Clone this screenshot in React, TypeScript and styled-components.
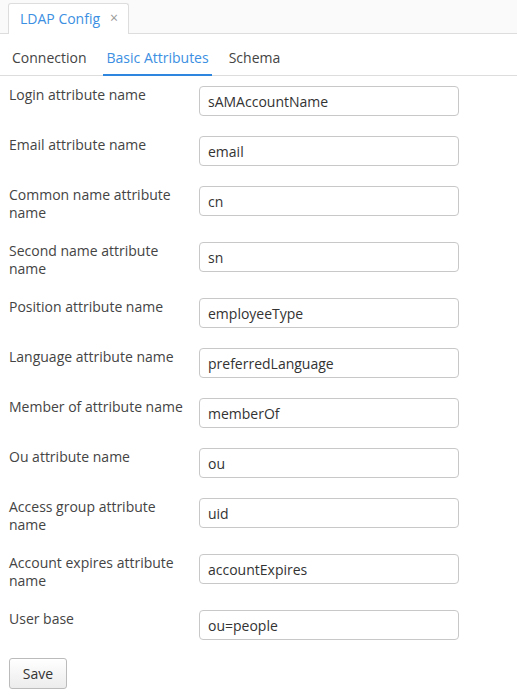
import React from "react";
import styled, { createGlobalStyle } from "styled-components";

const Global = createGlobalStyle`
  html, body { margin: 0; padding: 0; background: #fff; }
  body { font-family: "Open Sans", "Liberation Sans", sans-serif; font-size: 14px; color: #333; }
  * { box-sizing: border-box; }
`;

const TopBar = styled.div`
  display: flex;
  align-items: flex-end;
  height: 34px;
  padding-left: 8px;
  background: #fafafa;
  border-bottom: 1px solid #dddddd;
`;

const DocTab = styled.div`
  display: flex;
  align-items: center;
  gap: 10px;
  height: 31px;
  margin-bottom: -1px;
  padding: 0 10px 2px 11px;
  background: #fff;
  border: 1px solid #dddddd;
  border-bottom: none;
  border-radius: 3px 3px 0 0;
  color: #3c8fe2;
  font-size: 14px;
`;

const Close = styled.span`
  color: #999;
  font-size: 14px;
  line-height: 1;
`;

const SubTabs = styled.div`
  display: flex;
  gap: 13px;
  height: 42px;
  padding-left: 8px;
  border-bottom: 1px solid #dddddd;
`;

const SubTab = styled.div<{ $active?: boolean }>`
  display: flex;
  align-items: center;
  padding: 7px 3px 0 4px;
  margin-bottom: -1px;
  color: ${(p) => (p.$active ? "#3c8fe2" : "#444")};
  border-bottom: 2px solid ${(p) => (p.$active ? "#2f86df" : "transparent")};
`;

const Form = styled.div`
  display: flex;
  flex-direction: column;
  padding: 10px 9px 0 9px;
`;

const Row = styled.div`
  display: flex;
  align-items: flex-start;
  margin-bottom: 20px;
`;

const Label = styled.div`
  width: 190px;
  padding-right: 10px;
  line-height: 18px;
  color: #444;
`;

const Input = styled.input`
  width: 260px;
  height: 30px;
  padding: 0 8px;
  border: 1px solid #c8c8c8;
  border-radius: 4px;
  font-family: inherit;
  font-size: 14px;
  color: #333;
  outline: none;
`;

const SaveButton = styled.button`
  width: 58px;
  height: 31px;
  margin-top: -2px;
  border: 1px solid #bbbbbb;
  border-radius: 3px;
  background: linear-gradient(#ffffff, #ececec);
  font-family: inherit;
  font-size: 14px;
  color: #333;
  padding: 0;
`;

const fields: [string, string][] = [
  ["Login attribute name", "sAMAccountName"],
  ["Email attribute name", "email"],
  ["Common name attribute name", "cn"],
  ["Second name attribute name", "sn"],
  ["Position attribute name", "employeeType"],
  ["Language attribute name", "preferredLanguage"],
  ["Member of attribute name", "memberOf"],
  ["Ou attribute name", "ou"],
  ["Access group attribute name", "uid"],
  ["Account expires attribute name", "accountExpires"],
  ["User base", "ou=people"],
];

export default function App() {
  return (
    <>
      <Global />
      <TopBar>
        <DocTab>
          LDAP Config <Close>×</Close>
        </DocTab>
      </TopBar>
      <SubTabs>
        <SubTab>Connection</SubTab>
        <SubTab $active>Basic Attributes</SubTab>
        <SubTab>Schema</SubTab>
      </SubTabs>
      <Form>
        {fields.map(([l, v]) => (
          <Row key={l}>
            <Label>{l}</Label>
            <Input defaultValue={v} />
          </Row>
        ))}
        <div>
          <SaveButton>Save</SaveButton>
        </div>
      </Form>
    </>
  );
}
